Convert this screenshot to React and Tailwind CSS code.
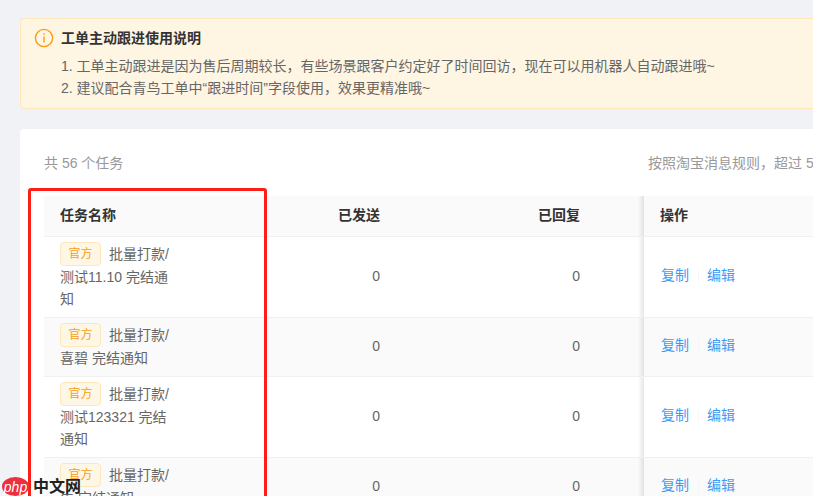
import React from "react";

const rows = [
  { lines: ["测试11.10 完结通", "知"], h: "h-[81px]", sent: 0, replied: 0 },
  { lines: ["喜碧 完结通知"], h: "h-[59px]", sent: 0, replied: 0, striped: true },
  { lines: ["测试123321 完结", "通知"], h: "h-[81px]", sent: 0, replied: 0 },
  { lines: ["生 完结通知"], h: "h-[59px]", sent: 0, replied: 0, striped: true },
];

function FixedEdge() {
  return (
    <div className="flex h-full w-[48px] shrink-0 justify-end">
      <div className="h-full w-[6px] bg-gradient-to-r from-transparent to-black/10" />
    </div>
  );
}

function TaskRow({ row }) {
  return (
    <div className={`flex items-center border-b border-[#f0f0f0] ${row.h} ${row.striped ? "bg-[#fafafa]" : "bg-white"}`}>
      <div className="w-[144px] shrink-0 pb-[2px] pl-4 text-[14px] leading-[22px] text-[#666]">
        <div className="flex items-center whitespace-nowrap">
          <span className="mr-[8px] flex h-[24px] w-[41px] items-center justify-center rounded-[4px] border border-[#ffe7ba] bg-[#fff7e6] text-[12px] text-[#fa9d14]">
            官方
          </span>
          批量打款/
        </div>
        {row.lines.map((l) => (
          <div key={l} className="whitespace-nowrap">{l}</div>
        ))}
      </div>
      <div className="w-[208px] shrink-0 pb-[2px] pr-4 text-right text-[14px] text-[#666]">{row.sent}</div>
      <div className="w-[200px] shrink-0 pb-[2px] pr-4 text-right text-[14px] text-[#666]">{row.replied}</div>
      <FixedEdge />
      <div className="flex h-full flex-1 items-center pb-[3px] pl-[17px] text-[14px] text-[#3d9bf5]">
        <span>复制</span>
        <span className="ml-[9px] mr-[8px] h-[12px] w-px bg-[#f5f5f5]" />
        <span>编辑</span>
      </div>
    </div>
  );
}

export default function App() {
  return (
    <div
      className="relative h-[496px] w-[813px] overflow-hidden bg-[#f0f2f5] pl-5 pt-[18px]"
      style={{ fontFamily: '"Liberation Sans", "Noto Sans CJK SC", sans-serif' }}
    >
      {/* Notice */}
      <div className="flex h-[91px] w-[840px] rounded-[4px] border border-[#ffe7ba] bg-[#fff5e3] pl-[13px] pt-[8px]">
        <svg className="mt-[1px] h-[20px] w-[20px] shrink-0" viewBox="0 0 20 20" fill="none" stroke="#fa9d14" strokeWidth="1.4">
          <circle cx="10" cy="10" r="8.6" />
          <path d="M10 8.5v6" />
          <path d="M10 5.2v1.6" />
        </svg>
        <div className="ml-[7px] text-[14px] leading-[22px] text-[#666]">
          <div className="font-bold text-[#333]">工单主动跟进使用说明</div>
          <div className="mt-[6px] whitespace-nowrap">1. 工单主动跟进是因为售后周期较长，有些场景跟客户约定好了时间回访，现在可以用机器人自动跟进哦~</div>
          <div className="whitespace-nowrap">2. 建议配合青鸟工单中“跟进时间”字段使用，效果更精准哦~</div>
        </div>
      </div>

      {/* Task card */}
      <div className="mt-[20px] w-[840px] rounded-t-[4px] bg-white px-6 pt-6">
        <div className="flex h-[22px] items-center justify-between pb-[2px] text-[14px] text-[#999]">
          <span>共 56 个任务</span>
          <span className="w-[188px] overflow-hidden whitespace-nowrap">按照淘宝消息规则，超过 50</span>
        </div>
        <div className="mt-[21px]">
          <div className="flex h-[41px] items-center border-b border-[#f0f0f0] bg-[#fafafa] text-[14px] font-bold text-[#333]">
            <div className="w-[144px] shrink-0 pb-[2px] pl-4">任务名称</div>
            <div className="w-[208px] shrink-0 pb-[2px] pr-4 text-right">已发送</div>
            <div className="w-[200px] shrink-0 pb-[2px] pr-4 text-right">已回复</div>
            <FixedEdge />
            <div className="flex h-full flex-1 items-center pb-[2px] pl-4">操作</div>
          </div>
          {rows.map((row, i) => (
            <TaskRow key={i} row={row} />
          ))}
        </div>
      </div>

      {/* Red highlight */}
      <div className="absolute left-[28px] top-[188px] h-[340px] w-[239px] rounded-[3px] border-[3px] border-[#fb1f17]" />

      {/* Watermark */}
      <div className="absolute left-[2px] top-[477px] flex items-center">
        <span className="flex h-[19px] w-[27px] items-center justify-center rounded-[50%] bg-[#ec2f3c] text-[14px] italic leading-none text-white">php</span>
        <span className="ml-[4px] text-[16px] font-bold leading-none text-[#222]">中文网</span>
      </div>
    </div>
  );
}
